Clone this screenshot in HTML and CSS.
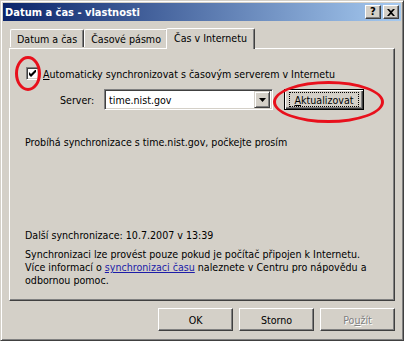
FILE: index.html
```html
<!DOCTYPE html>
<html>
<head>
<meta charset="utf-8">
<link rel="stylesheet" href="styles.css">
</head>
<body>
<div class="window">
  <div class="titlebar">
    <span class="title">Datum a čas - vlastnosti</span>
    <div class="caption-btns">
      <div class="cbtn"><span class="help">?</span></div>
      <div class="cbtn"><svg width="8" height="7" viewBox="0 0 8 7"><path d="M0 0h2l2 2 2-2h2v0L5 3.5 8 7H6L4 5 2 7H0l3-3.5z" fill="#000"/></svg></div>
    </div>
  </div>
  <div class="client">
    <div class="tabs">
      <div class="tab">Datum a čas</div>
      <div class="tab">Časové pásmo</div>
      <div class="tab active">Čas v Internetu</div>
    </div>
    <div class="panel">
      <div class="check-row">
        <div class="checkbox"><svg width="7" height="7" viewBox="0 0 7 7"><path d="M0 2v3l2 2 5-5V-1L2 4z" fill="#000"/></svg></div>
        <span><u>A</u>utomaticky synchronizovat s časovým serverem v Internetu</span>
        <div class="ring ring-check"></div>
      </div>
      <div class="server-row">
        <span class="server-label">Server:</span>
        <div class="combo">
          <span class="combo-text">time.nist.gov</span>
          <div class="combo-btn"><svg width="7" height="4" viewBox="0 0 7 4"><path d="M0 0h7L3.5 4z" fill="#000"/></svg></div>
        </div>
        <div class="btn default"><span class="focus"><u>A</u>ktualizovat</span></div>
        <div class="ring ring-btn"></div>
      </div>
      <p class="status">Probíhá synchronizace s time.nist.gov, počkejte prosím</p>
      <p class="next">Další synchronizace: 10.7.2007 v 13:39</p>
      <p class="info">Synchronizaci lze provést pouze pokud je počítač připojen k Internetu.<br>Více informací o <span class="link">synchronizaci času</span> naleznete v Centru pro nápovědu a<br>odbornou pomoc.</p>
    </div>
    <div class="buttons">
      <div class="btn">OK</div>
      <div class="btn">Storno</div>
      <div class="btn disabled">Po<u>u</u>žít</div>
    </div>
  </div>
</div>
</body>
</html>
```

FILE: styles.css
```css
html, body {
  margin: 0;
  padding: 0;
  background: #d4d0c8;
}
body {
  width: 404px;
  height: 341px;
  overflow: hidden;
  font-family: "DejaVu Sans Condensed", "DejaVu Sans", sans-serif;
  font-size: 10.6px;
  color: #000;
}
.window {
  box-sizing: border-box;
  width: 404px;
  height: 341px;
  padding: 2px;
  border: 1px solid;
  border-color: #d4d0c8 #404040 #404040 #d4d0c8;
  box-shadow: inset 1px 1px #fff, inset -1px -1px #808080;
  display: flex;
  flex-direction: column;
}
.titlebar {
  height: 18px;
  background: linear-gradient(to right, #0a246a, #a6caf0);
  display: flex;
  align-items: center;
  justify-content: space-between;
  padding: 0 2px 0 2px;
}
.title {
  color: #fff;
  font-weight: bold;
  font-size: 11px;
}
.caption-btns {
  display: flex;
  gap: 2px;
}
.cbtn {
  box-sizing: border-box;
  width: 16px;
  height: 14px;
  background: #d4d0c8;
  border: 1px solid;
  border-color: #fff #404040 #404040 #fff;
  box-shadow: inset -1px -1px #808080;
  display: flex;
  align-items: center;
  justify-content: center;
}
.help {
  font-family: "DejaVu Sans", sans-serif;
  font-weight: bold;
  font-size: 10px;
  line-height: 10px;
  margin-top: -1px;
}
.client {
  flex: 1;
  display: flex;
  flex-direction: column;
  padding: 7px 6px 7px 6px;
}
.tabs {
  display: flex;
  height: 20px;
  padding-left: 1px;
  align-items: flex-end;
  position: relative;
  z-index: 1;
}
.tab {
  box-sizing: border-box;
  height: 18px;
  padding: 0 6px;
  border: 1px solid;
  border-bottom: none;
  border-color: #fff #404040 transparent #fff;
  border-radius: 2px 2px 0 0;
  box-shadow: inset -1px 0 #808080;
  display: flex;
  align-items: center;
  margin-bottom: 1px;
  white-space: nowrap;
}
.tab.active {
  height: 21px;
  margin: 0 -2px -1px -2px;
  padding: 0 7px 2px 7px;
  background: #d4d0c8;
}
.panel {
  flex: 1;
  box-sizing: border-box;
  border: 1px solid;
  border-color: #fff #404040 #404040 #fff;
  box-shadow: inset -1px -1px #808080;
  padding: 18px 0 0 15px;
  display: flex;
  flex-direction: column;
}
.check-row {
  position: relative;
  display: flex;
  align-items: center;
  height: 13px;
  gap: 4px;
  margin-left: 1px;
}
.checkbox {
  box-sizing: border-box;
  width: 13px;
  height: 13px;
  background: #fff;
  border: 1px solid;
  border-color: #808080 #fff #fff #808080;
  box-shadow: inset 1px 1px #404040, inset -1px -1px #d4d0c8;
  display: flex;
  align-items: center;
  justify-content: center;
}
.ring {
  position: absolute;
  border: 3px solid #e8101c;
  border-radius: 50%;
  box-sizing: border-box;
  pointer-events: none;
}
.ring-check {
  left: -11px;
  top: -11px;
  width: 26px;
  height: 35px;
}
.server-row {
  position: relative;
  display: flex;
  align-items: center;
  margin-top: 9px;
  height: 21px;
}
.server-label {
  margin-left: 35px;
  width: 44px;
}
.combo {
  box-sizing: border-box;
  width: 169px;
  height: 21px;
  background: #fff;
  border: 1px solid;
  border-color: #808080 #fff #fff #808080;
  box-shadow: inset 1px 1px #404040, inset -1px -1px #d4d0c8;
  display: flex;
  align-items: center;
  padding: 2px;
}
.combo-text {
  flex: 1;
  padding-left: 2px;
}
.combo-btn {
  box-sizing: border-box;
  width: 16px;
  height: 17px;
  background: #d4d0c8;
  border: 1px solid;
  border-color: #d4d0c8 #404040 #404040 #d4d0c8;
  box-shadow: inset 1px 1px #fff, inset -1px -1px #808080;
  display: flex;
  align-items: center;
  justify-content: center;
}
.btn {
  box-sizing: border-box;
  width: 75px;
  height: 23px;
  border: 1px solid;
  border-color: #fff #404040 #404040 #fff;
  box-shadow: inset -1px -1px #808080;
  display: flex;
  align-items: center;
  justify-content: center;
}
.btn.default {
  width: 80px;
  height: 21px;
  margin-left: 11px;
  border: 1px solid #000;
  box-shadow: inset 1px 1px #fff, inset -1px -1px #404040, inset -2px -2px #808080;
}
.focus {
  box-sizing: border-box;
  width: 70px;
  height: 15px;
  border: 1px dotted #000;
  display: flex;
  align-items: center;
  justify-content: center;
}
.ring-btn {
  left: 248px;
  top: -8px;
  width: 111px;
  height: 42px;
}
p {
  margin: 0;
  line-height: 13px;
}
.status {
  margin-top: 26px;
}
.next {
  margin-top: 80px;
}
.info {
  margin-top: 6px;
}
.link {
  color: #1c1ca8;
  text-decoration: underline;
}
.buttons {
  display: flex;
  justify-content: flex-end;
  gap: 6px;
  margin-top: 7px;
}
.btn.disabled {
  color: #808080;
  text-shadow: 1px 1px #fff;
}
```
